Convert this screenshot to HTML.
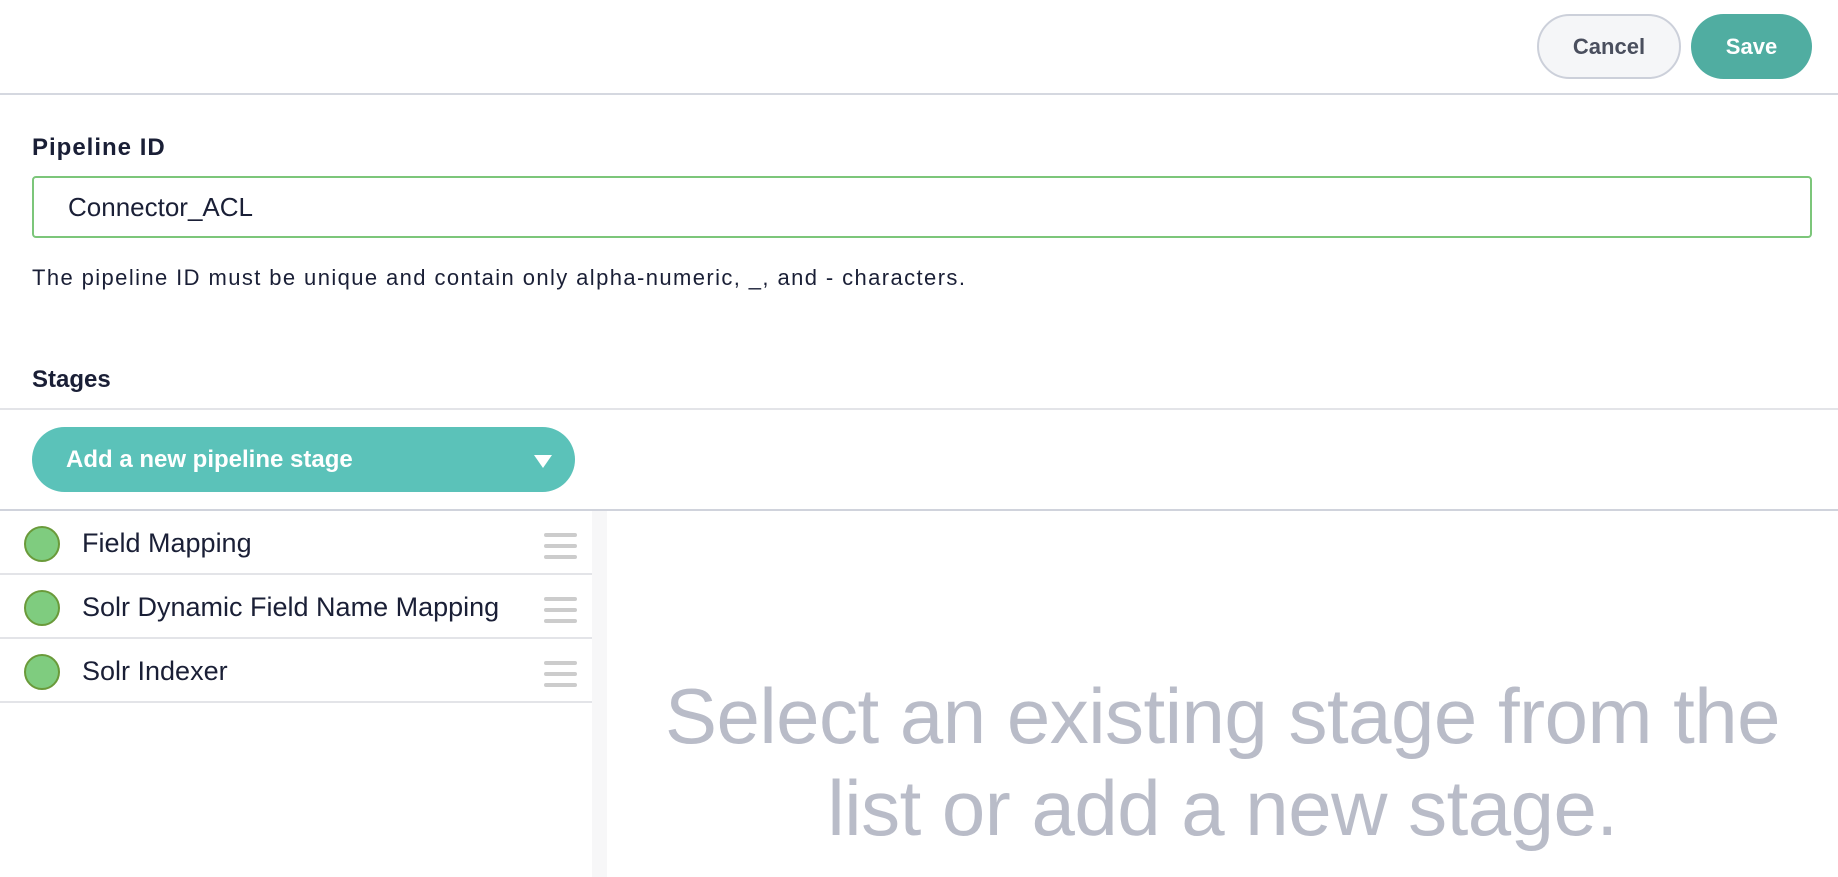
<!DOCTYPE html>
<html><head><meta charset="utf-8"><style>
*{box-sizing:border-box;margin:0;padding:0}
body{width:1838px;height:877px;overflow:hidden;background:#fff;font-family:"Liberation Sans",sans-serif;color:#1a1f36;position:relative}
.abs{position:absolute}
.btn{position:absolute;top:14px;height:65px;border-radius:33px;font-size:22px;font-weight:bold;display:flex;align-items:center;justify-content:center}
.row{position:absolute;left:0;width:592px;height:64px;border-bottom:2px solid #e3e4e8}
.dot{position:absolute;left:24px;top:15px;width:36px;height:36px;border-radius:50%;background:#7fcc7f;border:2px solid #6a9a3a}
.lbl{position:absolute;left:82px;top:0;line-height:64px;font-size:27px;color:#1a1f36}
.ham{position:absolute;left:544px;top:22px;width:33px}
.ham i{display:block;height:4px;background:#ccc;border-radius:2px;margin-bottom:7px}
</style></head><body>
<div class="btn" style="left:1537px;width:144px;border:2px solid #ccd0da;background:#f5f6f8;color:#4a4f5e">Cancel</div>
<div class="btn" style="left:1691px;width:121px;background:#50ada1;color:#fff">Save</div>
<div class="abs" style="left:0;top:93px;width:1838px;height:2px;background:#d5d8e0"></div>
<div class="abs" style="left:32px;top:134px;font-size:24px;font-weight:bold;letter-spacing:1px">Pipeline ID</div>
<div class="abs" style="left:32px;top:176px;width:1780px;height:62px;border:2px solid #7cc67a;border-radius:4px;font-size:26px;line-height:58px;padding-left:34px">Connector_ACL</div>
<div class="abs" style="left:32px;top:265px;font-size:22px;letter-spacing:1.4px">The pipeline ID must be unique and contain only alpha-numeric, _, and - characters.</div>
<div class="abs" style="left:32px;top:366px;font-size:24px;font-weight:bold">Stages</div>
<div class="abs" style="left:0;top:408px;width:1838px;height:2px;background:#e3e4e8"></div>
<div class="abs" style="left:32px;top:427px;width:543px;height:65px;border-radius:33px;background:#5bc2b9;color:#fff;font-size:24px;font-weight:bold;line-height:65px;padding-left:34px">Add a new pipeline stage
<span style="position:absolute;left:502px;top:28px;width:0;height:0;border-left:9px solid transparent;border-right:9px solid transparent;border-top:13px solid #fff"></span></div>
<div class="abs" style="left:0;top:509px;width:1838px;height:2px;background:#d0d3dc"></div>
<div class="abs" style="left:592px;top:511px;width:15px;height:366px;background:#f7f7f8"></div>
<div class="row" style="top:511px"><div class="dot"></div><div class="lbl">Field Mapping</div><div class="ham"><i></i><i></i><i></i></div></div>
<div class="row" style="top:575px"><div class="dot"></div><div class="lbl">Solr Dynamic Field Name Mapping</div><div class="ham"><i></i><i></i><i></i></div></div>
<div class="row" style="top:639px"><div class="dot"></div><div class="lbl">Solr Indexer</div><div class="ham"><i></i><i></i><i></i></div></div>
<div class="abs" style="left:607px;top:670px;width:1231px;text-align:center;font-size:78px;line-height:92px;color:#b9bcc8;letter-spacing:-0.5px">Select an existing stage from the<br>list or add a new stage.</div>
</body></html>
